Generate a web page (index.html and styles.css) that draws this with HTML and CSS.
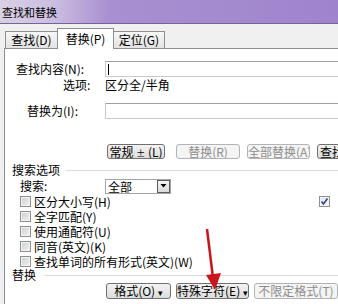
FILE: index.html
```html
<!DOCTYPE html>
<html lang="zh-CN">
<head>
  <meta charset="UTF-8">
  <title>查找和替换</title>
  <link rel="stylesheet" href="styles.css">
</head>
<body>
  <div class="titlebar">查找和替换</div>

  <div class="tabs">
    <div class="tab t1">查找(D)</div>
    <div class="tab t2 active">替换(P)</div>
    <div class="tab t3">定位(G)</div>
  </div>

  <div class="panel">
    <div class="field">
      <label class="lbl l-find">查找内容(N):</label>
      <div class="input"><span class="caret"></span></div>
    </div>
    <div class="field opt">
      <span class="lbl l-opt">选项:</span>
      <span>区分全/半角</span>
    </div>
    <div class="field repl">
      <label class="lbl l-repl">替换为(I):</label>
      <div class="input"></div>
    </div>

    <div class="btnrow">
      <button class="btn b-more">常规 <small>±</small> (L)</button>
      <button class="btn b-repl" disabled>替换(R)</button>
      <button class="btn b-all" disabled>全部替换(A)</button>
      <button class="btn b-next">查找</button>
    </div>

    <div class="grp"><span>搜索选项</span></div>

    <div class="field search">
      <span class="lbl l-search">搜索:</span>
      <div class="combo">
        <span class="combo-text">全部</span>
        <span class="dd"><svg width="7" height="4" viewBox="0 0 7 4"><path d="M0.5 0h6L3.5 3.5z" fill="#000"/></svg></span>
      </div>
    </div>

    <div class="check">
      <span class="cb"></span><span>区分大小写(H)</span>
      <span class="cb on"><svg width="9" height="9" viewBox="0 0 9 9"><path d="M1.5 4.5l2 2.5 4-5.5" fill="none" stroke="#2a4a8a" stroke-width="1.6"/></svg></span>
    </div>
    <div class="check"><span class="cb"></span><span>全字匹配(Y)</span></div>
    <div class="check"><span class="cb"></span><span>使用通配符(U)</span></div>
    <div class="check"><span class="cb"></span><span>同音(英文)(K)</span></div>
    <div class="check"><span class="cb"></span><span>查找单词的所有形式(英文)(W)</span></div>

    <div class="grp g2"><span>替换</span></div>

    <div class="btnrow bottom">
      <button class="btn b-fmt">格式(O) <small>▾</small></button>
      <button class="btn b-spec">特殊字符(E) <small>▾</small></button>
      <button class="btn b-nofmt" disabled>不限定格式(T)</button>
    </div>
  </div>

  <svg class="arrow" width="338" height="304" viewBox="0 0 338 304">
    <path d="M207 229L213 278" stroke="#c8161b" stroke-width="2.5" fill="none"/>
    <path d="M206 275L221 273L215 290z" fill="#c8161b"/>
  </svg>
</body>
</html>
```

FILE: styles.css
```css
body { margin: 0; width: 338px; height: 304px; overflow: hidden; position: relative;
  font: 12px "Noto Sans CJK SC", sans-serif; color: #000; background: #f0f0f0; }

.titlebar { height: 23px; line-height: 24px; padding-left: 2px; font-size: 11px;
  background: linear-gradient(to right, #d9d1e3 0, #cbbde0 55px, #a88fd1 110px, #9f84cc 100%);
  border-bottom: 1px solid #77639a; }

.tabs { display: flex; align-items: flex-end; height: 24px; padding-left: 5px; }
.tab { box-sizing: border-box; height: 17px; line-height: 16px; text-align: center;
  border: 1px solid #8c8e94; border-bottom: none;
  background: linear-gradient(#f7f7f7, #e3e3e3); }
.t1 { width: 53px; }
.t2 { width: 57px; margin-left: -1px; }
.t3 { width: 52px; margin-left: -1px; }
.tab.active { height: 21px; line-height: 19px; margin-bottom: -1px; background: #fff;
  position: relative; z-index: 1; }

.panel { box-sizing: border-box; height: 256px; margin-left: 4px; padding-top: 12px;
  border-left: 1px solid #8c8e94; border-top: 1px solid #8c8e94; background: #fff; }

.field { display: flex; align-items: center; height: 16px; line-height: 14px; }
.lbl { box-sizing: border-box; width: 100px; flex: none; }
.l-find { padding-left: 11px; }
.l-opt { padding-left: 58px; }
.l-repl { padding-left: 22px; }
.l-search { padding-left: 15px; }
.opt { height: 13px; line-height: 13px; margin-top: 1px; }
.repl { margin-top: 12px; }

.input { box-sizing: border-box; flex: 1; height: 16px; margin-right: -4px; display: flex; align-items: center;
  border: 1px solid #c6cacf; border-top-color: #9ea2a8; }
.caret { width: 1px; height: 11px; margin-left: 2px; background: #000; }

.btnrow { display: flex; height: 15px; margin-top: 25px; padding-left: 102px; }
.btn { box-sizing: border-box; height: 15px; padding: 0; flex: none; white-space: nowrap; overflow: hidden;
  font: 12px "Noto Sans CJK SC", sans-serif; line-height: 13px; color: #000;
  border: 1px solid #707070; border-radius: 3px; background: linear-gradient(#f3f3f3, #dcdcdc); }
.btn small { font-size: 9px; }
.btn:disabled { color: #8d8d8d; border-color: #b0b4b7; background: #f4f4f4; }
.b-more { width: 58px; }
.b-repl { width: 64px; margin-left: 11px; }
.b-all { width: 63px; margin-left: 7px; }
.b-next { width: 30px; margin-left: 7px; margin-right: -8px; text-align: left; padding-left: 2px; }

.grp { display: flex; align-items: center; height: 12px; line-height: 12px; margin-top: 5px; padding-left: 7px; }
.grp::after { content: ""; flex: 1; margin-left: 6px; border-top: 1px solid #d5dce2; }
.g2 { margin-top: 0; }
.g2::after { margin-left: 9px; }

.search { margin-top: 2px; }
.combo { box-sizing: border-box; display: flex; width: 66px; height: 15px; border: 1px solid #a5a5a5; }
.combo-text { flex: 1; padding-left: 2px; line-height: 13px; }
.dd { box-sizing: border-box; width: 13px; display: flex; align-items: center; justify-content: center;
  border: 1px solid #5c5c5c; background: linear-gradient(#f6f6f6, #dadada); }

.check { display: flex; align-items: center; height: 15px; line-height: 14px; }
.cb { box-sizing: border-box; width: 11px; height: 11px; margin: 0 3px 0 15px; flex: none;
  border: 1px solid #8e8f8f; box-shadow: inset 0 0 0 1px #f4f4f4;
  background: linear-gradient(135deg, #c9cdd2, #f3f3f3); }
.cb.on { margin: 0 8px 0 auto; display: flex; align-items: center; justify-content: center;
  background: linear-gradient(135deg, #dde4ee, #fafafa); }

.bottom { height: 16px; margin-top: 2px; padding-left: 101px; }
.bottom .btn { height: 16px; line-height: 14px; }
.b-fmt { width: 65px; }
.b-spec { width: 73px; margin-left: 5px; }
.b-nofmt { width: 84px; margin-left: 5px; }

.arrow { position: absolute; left: 0; top: 0; pointer-events: none; z-index: 2; }
```
